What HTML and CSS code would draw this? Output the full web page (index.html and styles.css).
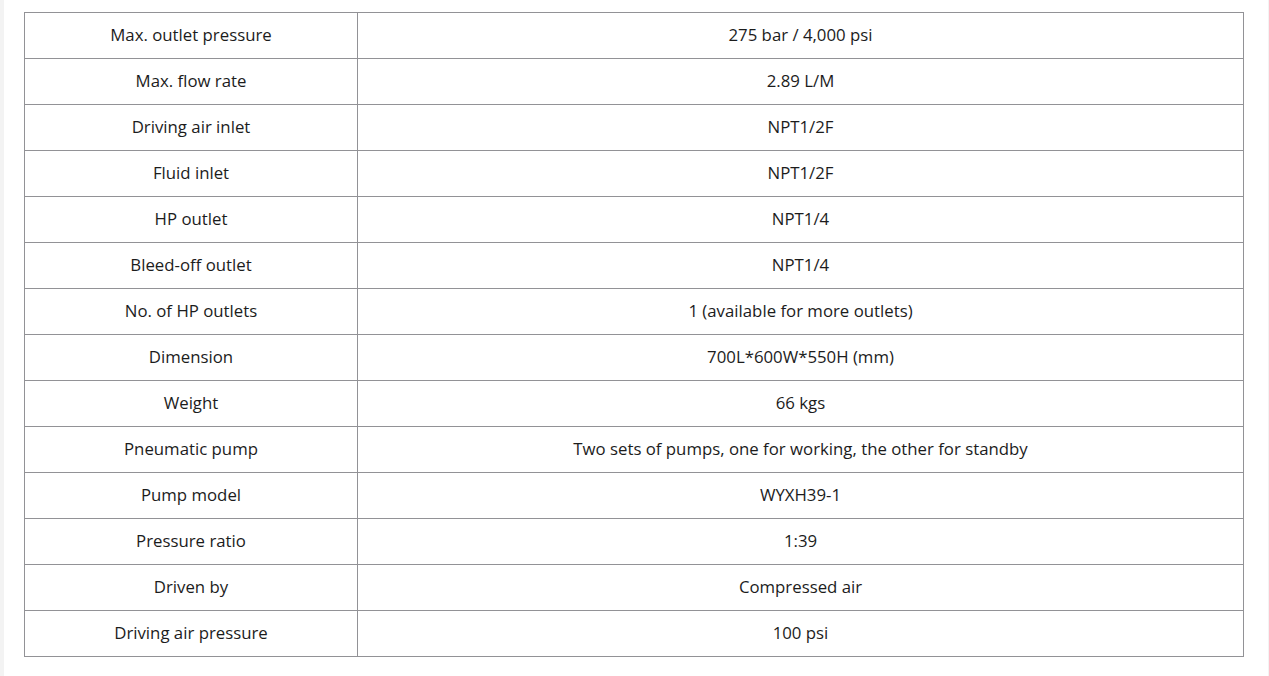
FILE: index.html
```html
<!DOCTYPE html>
<html lang="en">
<head>
<meta charset="utf-8">
<title>Specifications</title>
<link rel="stylesheet" href="styles.css">
</head>
<body>
<div class="page">
  <table class="spec">
    <tbody>
      <tr><td class="k">Max. outlet pressure</td><td>275 bar / 4,000 psi</td></tr>
      <tr><td class="k">Max. flow rate</td><td>2.89 L/M</td></tr>
      <tr><td class="k">Driving air inlet</td><td>NPT1/2F</td></tr>
      <tr><td class="k">Fluid inlet</td><td>NPT1/2F</td></tr>
      <tr><td class="k">HP outlet</td><td>NPT1/4</td></tr>
      <tr><td class="k">Bleed-off outlet</td><td>NPT1/4</td></tr>
      <tr><td class="k">No. of HP outlets</td><td>1 (available for more outlets)</td></tr>
      <tr><td class="k">Dimension</td><td>700L*600W*550H (mm)</td></tr>
      <tr><td class="k">Weight</td><td>66 kgs</td></tr>
      <tr><td class="k">Pneumatic pump</td><td>Two sets of pumps, one for working, the other for standby</td></tr>
      <tr><td class="k">Pump model</td><td>WYXH39-1</td></tr>
      <tr><td class="k">Pressure ratio</td><td>1:39</td></tr>
      <tr><td class="k">Driven by</td><td>Compressed air</td></tr>
      <tr><td class="k">Driving air pressure</td><td>100 psi</td></tr>
    </tbody>
  </table>
</div>
</body>
</html>
```

FILE: styles.css
```css
html, body {
  margin: 0;
  padding: 0;
  background: #f3f3f3;
  height: 100%;
}
.page {
  box-sizing: border-box;
  margin: 0 1px 0 4px;
  min-height: 100%;
  background: #ffffff;
  padding: 12px 24px 0 20px;
}
.spec {
  width: 1220px;
  border-collapse: collapse;
  font-family: "Open Sans", "Noto Sans", sans-serif;
  font-size: 16.8px;
  color: #1c1c1c;
}
.spec td {
  border: 1px solid #929296;
  height: 43px;
  padding: 0 0 2px 0;
  text-align: center;
  vertical-align: middle;
}
.spec td.k {
  width: 332px;
}
```
